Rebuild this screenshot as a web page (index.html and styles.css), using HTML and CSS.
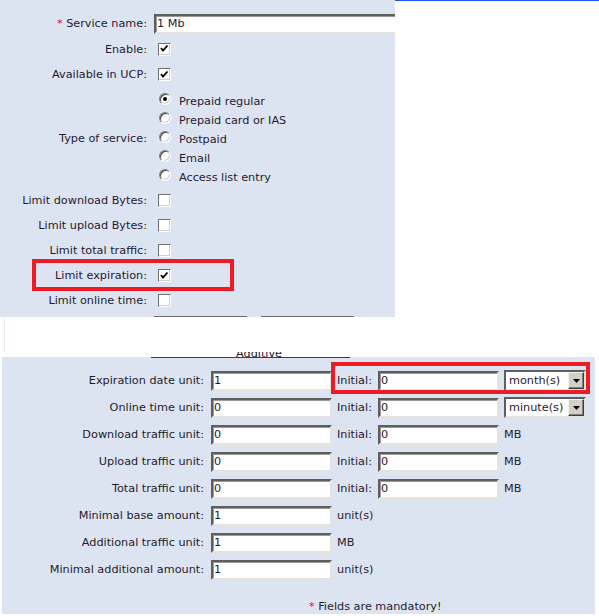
FILE: index.html
```html
<!DOCTYPE html>
<html>
<head>
<meta charset="utf-8">
<link rel="stylesheet" href="styles.css">
</head>
<body>
<div class="top">
  <section class="panel-top">
    <div class="row">
      <div class="lbl"><span class="req">*</span> Service name:</div>
      <div class="ctl"><input class="tin tin-name" type="text" value="1 Mb"></div>
    </div>
    <div class="row tall">
      <div class="lbl">Enable:</div>
      <div class="ctl"><span class="cb"><svg width="9" height="9" viewBox="0 0 9 9"><polyline points="1,4 3,6.5 7.5,1.5" fill="none" stroke="#000" stroke-width="1.8"/></svg></span></div>
    </div>
    <div class="row">
      <div class="lbl">Available in UCP:</div>
      <div class="ctl"><span class="cb"><svg width="9" height="9" viewBox="0 0 9 9"><polyline points="1,4 3,6.5 7.5,1.5" fill="none" stroke="#000" stroke-width="1.8"/></svg></span></div>
    </div>
    <div class="radio-row">
      <div class="lbl">Type of service:</div>
      <div class="radios">
        <div class="ropt"><span class="rb on"></span><span>Prepaid regular</span></div>
        <div class="ropt"><span class="rb"></span><span>Prepaid card or IAS</span></div>
        <div class="ropt"><span class="rb"></span><span>Postpaid</span></div>
        <div class="ropt"><span class="rb"></span><span>Email</span></div>
        <div class="ropt"><span class="rb"></span><span>Access list entry</span></div>
      </div>
    </div>
    <div class="row first-limit">
      <div class="lbl">Limit download Bytes:</div>
      <div class="ctl"><span class="cb"></span></div>
    </div>
    <div class="row">
      <div class="lbl">Limit upload Bytes:</div>
      <div class="ctl"><span class="cb"></span></div>
    </div>
    <div class="row">
      <div class="lbl">Limit total traffic:</div>
      <div class="ctl"><span class="cb"></span></div>
    </div>
    <div class="row">
      <div class="lbl">Limit expiration:</div>
      <div class="ctl"><span class="cb"><svg width="9" height="9" viewBox="0 0 9 9"><polyline points="1,4 3,6.5 7.5,1.5" fill="none" stroke="#000" stroke-width="1.8"/></svg></span></div>
    </div>
    <div class="row">
      <div class="lbl">Limit online time:</div>
      <div class="ctl"><span class="cb"></span></div>
    </div>
    <div class="btn-tops"><span></span><span></span></div>
    <div class="mark mark-top"></div>
  </section>
  <div class="blue-line"></div>
</div>

<div class="gap"></div>
<div class="tab-cut"><span class="legend">Additive</span></div>

<section class="panel-bottom">
  <div class="tab-line"></div>
  <div class="rows">
    <div class="brow">
      <div class="blbl">Expiration date unit:</div>
      <input class="tin in1" type="text" value="1">
      <span class="initial">Initial:</span>
      <input class="tin in2" type="text" value="0">
      <div class="sel"><span class="sel-text">month(s)</span><span class="sel-btn"><svg width="7" height="4" viewBox="0 0 7 4"><polygon points="0,0 7,0 3.5,4" fill="#000"/></svg></span></div>
    </div>
    <div class="brow">
      <div class="blbl">Online time unit:</div>
      <input class="tin in1" type="text" value="0">
      <span class="initial">Initial:</span>
      <input class="tin in2" type="text" value="0">
      <div class="sel"><span class="sel-text">minute(s)</span><span class="sel-btn"><svg width="7" height="4" viewBox="0 0 7 4"><polygon points="0,0 7,0 3.5,4" fill="#000"/></svg></span></div>
    </div>
    <div class="brow">
      <div class="blbl">Download traffic unit:</div>
      <input class="tin in1" type="text" value="0">
      <span class="initial">Initial:</span>
      <input class="tin in2" type="text" value="0">
      <span class="unit">MB</span>
    </div>
    <div class="brow">
      <div class="blbl">Upload traffic unit:</div>
      <input class="tin in1" type="text" value="0">
      <span class="initial">Initial:</span>
      <input class="tin in2" type="text" value="0">
      <span class="unit">MB</span>
    </div>
    <div class="brow">
      <div class="blbl">Total traffic unit:</div>
      <input class="tin in1" type="text" value="0">
      <span class="initial">Initial:</span>
      <input class="tin in2" type="text" value="0">
      <span class="unit">MB</span>
    </div>
    <div class="brow">
      <div class="blbl">Minimal base amount:</div>
      <input class="tin in1" type="text" value="1">
      <span class="unit">unit(s)</span>
    </div>
    <div class="brow">
      <div class="blbl">Additional traffic unit:</div>
      <input class="tin in1" type="text" value="1">
      <span class="unit">MB</span>
    </div>
    <div class="brow">
      <div class="blbl">Minimal additional amount:</div>
      <input class="tin in1" type="text" value="1">
      <span class="unit">unit(s)</span>
    </div>
  </div>
  <div class="mandatory"><span class="req">*</span> Fields are mandatory!</div>
  <div class="mark mark-bottom"></div>
</section>
</body>
</html>
```
FILE: styles.css
```css
body {
  margin: 0;
  background: #fff;
  font-family: "DejaVu Sans", Verdana, sans-serif;
  font-size: 11.25px;
  color: #1f1b2e;
}

.req { color: #ff0000; }

/* ---------- top panel ---------- */
.top {
  display: flex;
  align-items: flex-start;
}
.panel-top {
  position: relative;
  width: 395px;
  height: 317px;
  flex: none;
  box-sizing: border-box;
  padding-top: 11px;
  background: #dde4f1;
  overflow: hidden;
}
.blue-line {
  flex: 1;
  height: 1px;
  background: #1a52ff;
}

.row {
  display: flex;
  align-items: center;
  height: 25px;
}
.row.tall { height: 26px; }
.row.first-limit { margin-top: 2px; }

.lbl {
  width: 147px;
  flex: none;
  text-align: right;
  white-space: nowrap;
}
.ctl {
  margin-left: 7px;
  display: flex;
  align-items: center;
}

/* text inputs */
.tin {
  box-sizing: border-box;
  height: 20px;
  margin: 0;
  padding: 0 1px;
  border: 2px solid;
  border-color: #5e5e5e #e6e3dc #e6e3dc #5e5e5e;
  box-shadow: inset 1px 1px 0 #9a9a9a;
  background: #fff;
  font-family: inherit;
  font-size: 11.25px;
  color: #1f1b2e;
  outline: none;
}
.tin-name {
  width: 260px;
  height: 20px;
}

/* checkbox */
.cb {
  box-sizing: border-box;
  width: 13px;
  height: 13px;
  margin-left: 4px;
  border: 1px solid;
  border-color: #6f6f6f #ffffff #ffffff #6f6f6f;
  box-shadow: inset -1px -1px 0 #d4d0c8;
  background: #fff;
  display: flex;
  align-items: center;
  justify-content: center;
}
.cb svg { display: block; margin-left: -1px; margin-top: -1px; }

/* radios */
.radio-row {
  display: flex;
  align-items: center;
  margin-top: 4px;
}
.radios {
  margin-left: 12px;
  display: flex;
  flex-direction: column;
}
.ropt {
  display: flex;
  align-items: flex-start;
  height: 19px;
}
.ropt span:last-child {
  align-self: center;
  margin-top: 1px;
}
.rb {
  box-sizing: border-box;
  width: 12px;
  height: 12px;
  margin-top: 2px;
  margin-right: 8px;
  border-radius: 50%;
  border: 1px solid;
  border-color: #808080 #ffffff #ffffff #808080;
  box-shadow: inset 1px 1px 0 #404040, inset -1px -1px 0 #d4d0c8;
  background: #fff;
  display: flex;
  align-items: center;
  justify-content: center;
}
.rb.on::after {
  content: "";
  width: 4px;
  height: 4px;
  border-radius: 50%;
  background: #000;
}

.btn-tops {
  display: flex;
  gap: 14px;
  margin-top: 3px;
  margin-left: 154px;
}
.btn-tops span {
  width: 93px;
  height: 1px;
  background: #6a6a72;
}

/* red annotation boxes */
.mark {
  position: absolute;
  box-sizing: border-box;
  border: 4px solid #ed1c24;
}
.mark-top {
  left: 32px;
  top: 259px;
  width: 202px;
  height: 32px;
}
.mark-bottom {
  left: 329px;
  top: 5px;
  width: 259px;
  height: 32px;
}

/* ---------- gap ---------- */
.gap {
  height: 35px;
  margin-left: 4px;
  border-left: 1px solid #e6edf8;
}
.tab-cut {
  height: 5px;
  overflow: hidden;
  display: flex;
  align-items: flex-end;
  padding-left: 236px;
}
.legend {
  line-height: 13px;
  margin-bottom: -3px;
}

/* ---------- bottom panel ---------- */
.panel-bottom {
  position: relative;
  margin-left: 2px;
  width: 593px;
  height: 257px;
  box-sizing: border-box;
  background: #dde4f1;
}
.tab-line {
  width: 199px;
  height: 1px;
  margin-left: 149px;
  background: #3c3c44;
}
.rows {
  margin-top: 9px;
}
.brow {
  display: flex;
  align-items: center;
  height: 27px;
}
.blbl {
  width: 202px;
  flex: none;
  text-align: right;
  white-space: nowrap;
}
.in1 {
  margin-left: 7px;
  width: 121px;
}
.initial {
  margin-left: 5px;
  width: 41px;
}
.in2 {
  width: 121px;
}
.unit {
  margin-left: 5px;
}
.sel {
  margin-left: 5px;
  box-sizing: border-box;
  width: 82px;
  height: 21px;
  border: 2px solid;
  border-color: #5e5e5e #e6e3dc #e6e3dc #5e5e5e;
  background: #fff;
  display: flex;
  align-items: center;
  justify-content: space-between;
}
.sel-text {
  padding-left: 3px;
}
.sel-btn {
  box-sizing: border-box;
  width: 16px;
  height: 17px;
  background: #d4d0c8;
  border: 1px solid;
  border-color: #f4f2ee #404040 #404040 #f4f2ee;
  box-shadow: inset -1px -1px 0 #808080;
  display: flex;
  align-items: center;
  justify-content: center;
}
.sel-btn svg { display: block; }

.mandatory {
  margin-top: 17px;
  padding-left: 307px;
  height: 14px;
  line-height: 14px;
}
```
